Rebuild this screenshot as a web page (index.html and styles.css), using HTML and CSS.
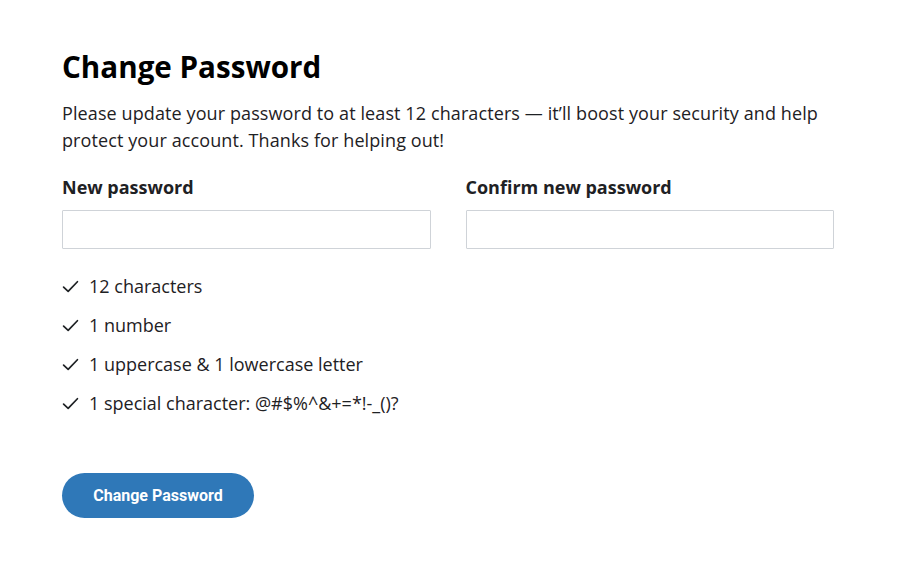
FILE: index.html
```html
<!DOCTYPE html>
<html>
<head>
<meta charset="utf-8">
<link rel="stylesheet" href="styles.css">
</head>
<body>
<main class="page">
  <h1 class="title">Change Password</h1>
  <p class="intro">Please update your password to at least 12 characters — it’ll boost your security and help protect your account. Thanks for helping out!</p>
  <div class="fields">
    <div class="field">
      <label class="label" for="np">New password</label>
      <input class="input" id="np" type="password">
    </div>
    <div class="field">
      <label class="label" for="cp">Confirm new password</label>
      <input class="input" id="cp" type="password">
    </div>
  </div>
  <ul class="rules">
    <li class="rule"><svg class="check" viewBox="0 0 16 16"><path d="M1.5 8.5 L5.8 12.6 L14.5 3.5" fill="none" stroke="currentColor" stroke-width="1.6" stroke-linecap="round" stroke-linejoin="round"/></svg>12 characters</li>
    <li class="rule"><svg class="check" viewBox="0 0 16 16"><path d="M1.5 8.5 L5.8 12.6 L14.5 3.5" fill="none" stroke="currentColor" stroke-width="1.6" stroke-linecap="round" stroke-linejoin="round"/></svg>1 number</li>
    <li class="rule"><svg class="check" viewBox="0 0 16 16"><path d="M1.5 8.5 L5.8 12.6 L14.5 3.5" fill="none" stroke="currentColor" stroke-width="1.6" stroke-linecap="round" stroke-linejoin="round"/></svg>1 uppercase &amp; 1 lowercase letter</li>
    <li class="rule"><svg class="check" viewBox="0 0 16 16"><path d="M1.5 8.5 L5.8 12.6 L14.5 3.5" fill="none" stroke="currentColor" stroke-width="1.6" stroke-linecap="round" stroke-linejoin="round"/></svg>1 special character: @#$%^&amp;+=*!-_()?</li>
  </ul>
  <button class="btn" type="button">Change Password</button>
</main>
</body>
</html>
```
FILE: styles.css
```css
html, body {
  margin: 0;
  padding: 0;
  background: #ffffff;
}
body {
  font-family: "Open Sans", "Liberation Sans", sans-serif;
  color: #1e2124;
}
.page {
  width: 772px;
  padding: 46px 0 0 62px;
}
.title {
  margin: 0;
  font-size: 29.6px;
  font-weight: 700;
  line-height: 42px;
  color: #000;
}
.intro {
  margin: 12px 0 0;
  font-size: 18px;
  line-height: 27px;
  letter-spacing: 0.1px;
}
.fields {
  display: grid;
  grid-template-columns: 1fr 1fr;
  column-gap: 35px;
  margin-top: 20px;
}
.field {
  display: flex;
  flex-direction: column;
}
.label {
  font-size: 18px;
  font-weight: 700;
  line-height: 27px;
  margin-bottom: 9px;
}
.input {
  height: 39px;
  box-sizing: border-box;
  border: 1px solid #cfd3d8;
  border-radius: 1px;
  margin: 0;
  padding: 0 10px;
  font: inherit;
  background: #fff;
}
.rules {
  list-style: none;
  margin: 24px 0 0;
  padding: 0;
}
.rule {
  display: flex;
  align-items: center;
  font-size: 18px;
  line-height: 27px;
  margin-bottom: 12px;
}
.check {
  width: 17px;
  height: 17px;
  margin-right: 10px;
  color: #1e2124;
}
.btn {
  margin-top: 44px;
  width: 192px;
  height: 45px;
  border: none;
  border-radius: 23px;
  background: #2f78b8;
  color: #fff;
  font-family: Roboto, "Liberation Sans", sans-serif;
  font-weight: 700;
  font-size: 16px;
  cursor: pointer;
}
```
